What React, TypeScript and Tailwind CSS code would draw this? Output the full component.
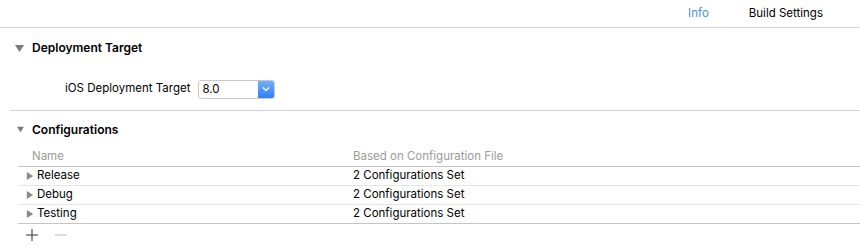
const font = { fontFamily: 'Inter, "Noto Sans", sans-serif' }

function Tri({ down, size = 8 }: { down?: boolean; size?: number }) {
  return (
    <svg width={size} height={size} viewBox="0 0 10 10" className="shrink-0">
      {down ? <path d="M0 1 L10 1 L5 9 Z" fill="#7a7a7a" /> : <path d="M1 0 L9 5 L1 10 Z" fill="#8a8a8a" />}
    </svg>
  )
}

const rows = ['Release', 'Debug', 'Testing']

export default function App() {
  return (
    <div className="w-[860px] h-[249px] bg-white text-black overflow-hidden" style={font}>
      <div className="h-[28px] border-b border-[#d4d4d4] flex items-center justify-end pr-[37px] text-[11.5px]">
        <span className="text-[#4a90e2]">Info</span>
        <span className="ml-[40px]">Build Settings</span>
      </div>

      <div className="flex items-center h-[39px] pl-[15px] pt-[1px]">
        <Tri down size={9} />
        <span className="ml-[8px] text-[12px] font-semibold">Deployment Target</span>
      </div>
      <div className="flex items-center h-[26px] mt-[9px] pl-[65px] text-[11.5px]">
        <span>iOS Deployment Target</span>
        <div className="ml-[8px] w-[77px] h-[19px] flex border border-[#c8c8c8] rounded-[3px] overflow-hidden">
          <span className="flex-1 pl-[3px] leading-[17px]">8.0</span>
          <div className="w-[16px] bg-gradient-to-b from-[#6fb0fb] to-[#2f7ff5] flex items-center justify-center">
            <svg width="8" height="6" viewBox="0 0 8 6"><path d="M1 1.5 L4 4.5 L7 1.5" stroke="white" strokeWidth="1.4" fill="none" /></svg>
          </div>
        </div>
      </div>
      <div className="ml-[10px] mt-[8px] border-b border-[#d4d4d4]" />

      <div className="flex items-center h-[37px] pl-[17px]">
        <Tri down size={7} />
        <span className="ml-[8px] text-[12px] font-semibold">Configurations</span>
      </div>

      <div className="ml-[18px] text-[11.5px]">
        <div className="flex h-[19px] items-center text-[#9b9b9b] border-b border-[#c4c4c4]">
          <span className="w-[335px] pl-[14px]">Name</span>
          <span>Based on Configuration File</span>
        </div>
        {rows.map((r, i) => (
          <div key={r} className={`flex h-[19px] items-center border-b ${i === rows.length - 1 ? 'border-[#c4c4c4]' : 'border-[#e6e6e6]'}`}>
            <div className="w-[335px] flex items-center pl-[8px]">
              <Tri size={8} />
              <span className="ml-[3px]">{r}</span>
            </div>
            <span>2 Configurations Set</span>
          </div>
        ))}
        <div className="flex items-center h-[22px] pl-[8px]">
          <svg width="12" height="12" viewBox="0 0 12 12"><path d="M6 0 V12 M0 6 H12" stroke="#333" strokeWidth="1" /></svg>
          <svg width="12" height="12" viewBox="0 0 12 12" className="ml-[17px]"><path d="M0 6 H12" stroke="#bbb" strokeWidth="1" /></svg>
        </div>
      </div>
    </div>
  )
}
